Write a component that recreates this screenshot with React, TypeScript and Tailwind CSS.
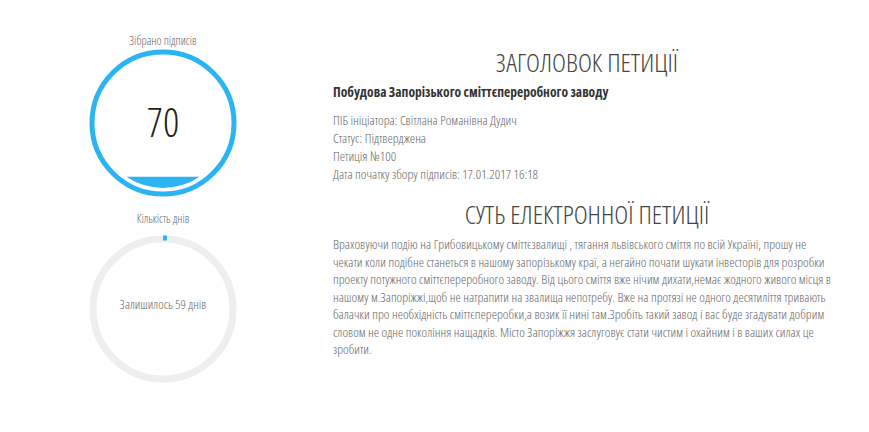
const BLUE = '#2cb4f2'

const BODY_LINES = [
  'Враховуючи подію на Грибовицькому сміттєзвалищі , тягання львівського сміття по всій Україні, прошу не',
  'чекати коли подібне станеться в нашому запорізькому краї, а негайно почати шукати інвесторів для розробки',
  'проекту потужного сміттєпереробного заводу. Від цього сміття вже нічим дихати,немає жодного живого місця в',
  'нашому м.Запоріжжі,щоб не натрапити на звалища непотребу. Вже на протязі не одного десятиліття тривають',
  'балачки про необхідність сміттєпереробки,а возик її нині там.Зробіть такий завод і вас буде згадувати добрим',
  'словом не одне покоління нащадків. Місто Запоріжжя заслуговує стати чистим і охайним і в ваших силах це',
  'зробити.',
]

function SignaturesGauge({ value }: { value: number }) {
  return (
    <svg width="150" height="150" viewBox="0 0 150 150">
      <circle cx="75" cy="75" r="71" fill="none" stroke={BLUE} strokeWidth="5" />
      <path d="M 38.4 128.7 L 111.6 128.7 A 65 65 0 0 1 38.4 128.7 Z" fill={BLUE} />
      <text
        x="75"
        y="89"
        textAnchor="middle"
        fontSize="40"
        fontWeight="300"
        fill="#222"
        style={{ fontFamily: '"Open Sans", sans-serif', fontStretch: '75%' }}
      >
        {value}
      </text>
    </svg>
  )
}

function DaysGauge({ daysLeft }: { daysLeft: number }) {
  return (
    <div className="relative h-[150px] w-[150px]">
      <svg width="150" height="150" viewBox="0 0 150 150">
        <circle cx="75" cy="75" r="70" fill="none" stroke="#eeeeee" strokeWidth="7" />
        <circle
          cx="75"
          cy="75"
          r="70"
          fill="none"
          stroke={BLUE}
          strokeWidth="5"
          strokeDasharray="4 1000"
          style={{ transform: 'translate(0, -1px) rotate(-90deg)', transformOrigin: '75px 75px' }}
        />
      </svg>
      <div className="absolute inset-0 flex items-center justify-center pb-[8px] text-[13px] text-[#666]">
        Залишилось {daysLeft} днів
      </div>
    </div>
  )
}

export default function App() {
  return (
    <div className="flex h-[432px] w-[869px] bg-white font-['Open_Sans',sans-serif] font-light [font-stretch:75%]">
      <div className="flex w-[326px] flex-col items-center pt-[34px]">
        <div className="h-[14px] text-[12px] leading-[14px] text-[#666]">Зібрано підписів</div>
        <SignaturesGauge value={70} />
        <div className="mt-[14px] h-[14px] text-[12px] leading-[14px] text-[#666]">Кількість днів</div>
        <div className="mt-[8px]">
          <DaysGauge daysLeft={59} />
        </div>
      </div>

      <div className="ml-[7px] w-[508px] pt-[46px]">
        <h1 className="text-center text-[26.5px] leading-[32px] text-[#444]">ЗАГОЛОВОК ПЕТИЦІЇ</h1>
        <h2 className="mt-[5px] text-[13.5px] font-bold leading-[18px] text-[#333]">
          Побудова Запорізького сміттєпереробного заводу
        </h2>
        <div className="mt-[10px] text-[13.4px] leading-[18px] text-[#666]">
          <p>ПІБ ініціатора: Світлана Романівна Дудич</p>
          <p>Статус: Підтверджена</p>
          <p>Петиція №100</p>
          <p>Дата початку збору підписів: 17.01.2017 16:18</p>
        </div>
        <h1 className="mt-[15px] text-center text-[26.5px] leading-[32px] text-[#444]">СУТЬ ЕЛЕКТРОННОЇ ПЕТИЦІЇ</h1>
        <p className="mt-[6px] whitespace-nowrap text-[13.4px] leading-[17.5px] text-[#666]">
          {BODY_LINES.map((line, i) => (
            <span key={i} className="block">
              {line}
            </span>
          ))}
        </p>
      </div>
    </div>
  )
}
